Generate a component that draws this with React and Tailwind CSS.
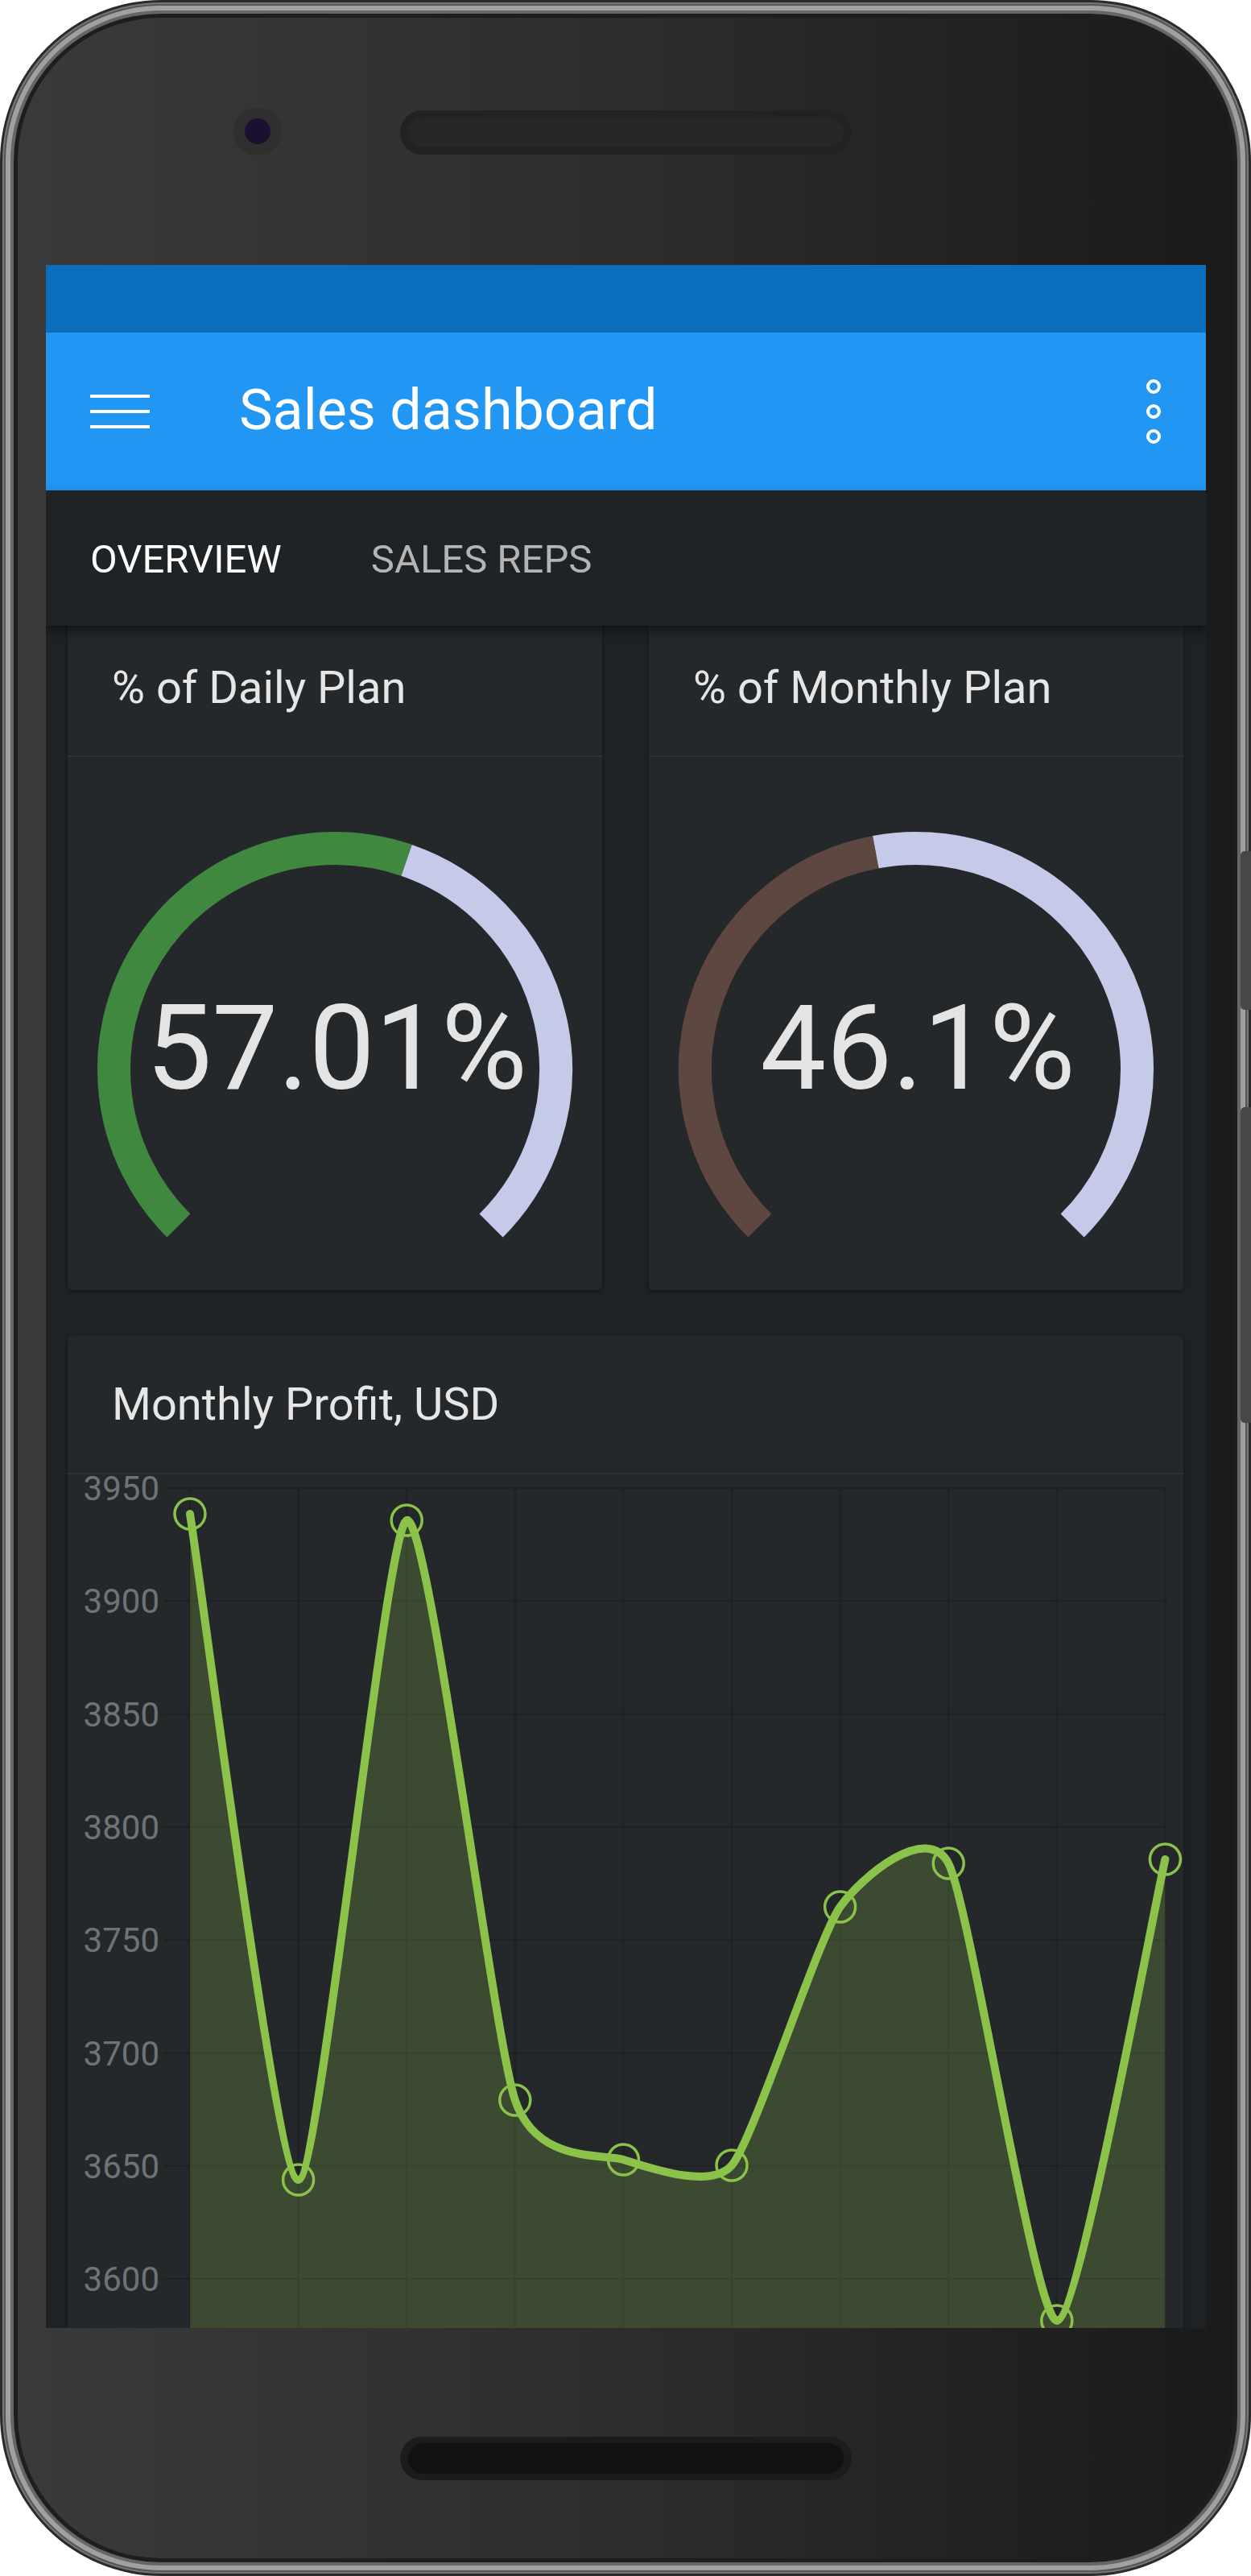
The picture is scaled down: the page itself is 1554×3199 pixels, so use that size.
import React from "react";

function arcPath(cx, cy, r, a0, a1) {
  const rad = (a) => (a * Math.PI) / 180;
  const x0 = cx + r * Math.cos(rad(a0));
  const y0 = cy + r * Math.sin(rad(a0));
  const x1 = cx + r * Math.cos(rad(a1));
  const y1 = cy + r * Math.sin(rad(a1));
  const large = a1 - a0 > 180 ? 1 : 0;
  return `M${x0.toFixed(2)} ${y0.toFixed(2)} A${r} ${r} 0 ${large} 1 ${x1.toFixed(2)} ${y1.toFixed(2)}`;
}

function Gauge({ value, label, color }) {
  const cx = 332;
  const cy = 388;
  const r = 274.5;
  const sw = 41;
  const end = 135 + (value / 100) * 270;
  return (
    <svg width="664" height="662" viewBox="0 0 664 662" className="block">
      <path d={arcPath(cx, cy, r, 135, end)} stroke={color} strokeWidth={sw} fill="none" />
      <path d={arcPath(cx, cy, r, end, 405)} stroke="#c5cae9" strokeWidth={sw} fill="none" />
      <text
        x={cx + 2}
        y={412}
        textAnchor="middle"
        fontSize="146"
        fill="#e4e4e4"
        fontFamily="Roboto, 'Noto Sans', sans-serif"
      >
        {label}
      </text>
    </svg>
  );
}

function smoothPath(pts, k = 0.1) {
  let d = `M${pts[0][0]} ${pts[0][1]}`;
  for (let i = 0; i < pts.length - 1; i++) {
    const p0 = pts[i - 1] || pts[i];
    const p1 = pts[i];
    const p2 = pts[i + 1];
    const p3 = pts[i + 2] || p2;
    const c1 = [p1[0] + (p2[0] - p0[0]) * k, p1[1] + (p2[1] - p0[1]) * k];
    const c2 = [p2[0] - (p3[0] - p1[0]) * k, p2[1] - (p3[1] - p1[1]) * k];
    d += ` C${c1[0].toFixed(2)} ${c1[1].toFixed(2)} ${c2[0].toFixed(2)} ${c2[1].toFixed(2)} ${p2[0].toFixed(2)} ${p2[1].toFixed(2)}`;
  }
  return d;
}

function ProfitChart() {
  const W = 1386;
  const H = 1160;
  const x0 = 152;
  const dx = 134.6;
  const y0 = 17;
  const dy = 140.3;
  const ys = [49, 876, 57, 777, 851, 858, 537, 483, 1051, 478];
  const pts = ys.map((y, i) => [x0 + dx * i, y]);
  const line = smoothPath(pts, 0.1);
  const area = `${line} L${pts[pts.length - 1][0]} ${H} L${pts[0][0]} ${H} Z`;
  const grid = [0, 1, 2, 3, 4, 5, 6, 7, 8];
  const labels = ["3950", "3900", "3850", "3800", "3750", "3700", "3650", "3600"];
  return (
    <svg width={W} height={H} viewBox={`0 0 ${W} ${H}`} className="block overflow-visible">
      {grid.map((i) => (
        <line key={"h" + i} x1={119} x2={1365} y1={y0 + dy * i} y2={y0 + dy * i} stroke="#1e2124" strokeWidth="2" />
      ))}
      {pts.map((p, i) => (
        <line key={"v" + i} x1={p[0]} x2={p[0]} y1={y0} y2={H} stroke="#1e2124" strokeWidth="2" />
      ))}
      {labels.map((l, i) => (
        <text
          key={"t" + l}
          x={114}
          y={y0 + dy * i + 15}
          textAnchor="end"
          fontSize="42"
          fill="#6f7376"
          fontFamily="Roboto, 'Noto Sans', sans-serif"
        >
          {l}
        </text>
      ))}
      <path d={area} fill="#8bc34a" fillOpacity="0.22" />
      {pts.map((p, i) => (
        <circle key={"c" + i} cx={p[0]} cy={p[1]} r="19" fill="none" stroke="#8bc34a" strokeWidth="3.5" />
      ))}
      <path d={line} fill="none" stroke="#8bc34a" strokeWidth="10" strokeLinejoin="round" strokeLinecap="round" />
    </svg>
  );
}

function GaugeCard({ title, value, label, color }) {
  return (
    <div className="w-[664px] bg-[#24282b] rounded-b-[6px] shadow-[0_2px_5px_rgba(0,0,0,0.35)]">
      <div className="h-[170px] border-b-2 border-[#2e3236] flex items-center pl-[55px] text-[56px] text-[#e6e6e6]">
        {title}
      </div>
      <div className="h-[662px]">
        <Gauge value={value} label={label} color={color} />
      </div>
    </div>
  );
}

export default function App() {
  return (
    <div className="relative w-[1554px] h-[3199px] bg-white">
      {/* phone frame bands */}
      <div className="w-[1554px] h-[3199px] rounded-[200px] bg-[#2a2a2a] p-[3px]">
        <div className="h-full rounded-[197px] bg-[#767676] p-[2px]">
          <div className="h-full rounded-[195px] bg-[#555555] p-[2px]">
            <div className="h-full rounded-[193px] bg-[#a0a0a0] p-[6px]">
              <div className="h-full rounded-[187px] bg-[#666666] p-[4px]">
                <div className="h-full rounded-[183px] bg-[#1e1e1e] p-[5px]">
                  <div className="h-full rounded-[178px] bg-linear-to-r from-[#3a3a3a] via-[#2d2d2d] to-[#1a1a1a] flex flex-col">
                    {/* top: camera + speaker */}
                    <div className="h-[307px] shrink-0 flex items-start pt-[111px] pl-[268px]">
                      <div className="w-[60px] h-[60px] rounded-full bg-[#2f2f2f] flex items-center justify-center">
                        <div className="w-[32px] h-[32px] rounded-full bg-[#1b1030]" />
                      </div>
                      <div className="ml-[147px] mt-[4px] w-[561px] h-[55px] rounded-full bg-[#222222] px-[10px] py-[10px]">
                        <div className="w-full h-full rounded-full bg-[#272727]" />
                      </div>
                    </div>

                    {/* screen */}
                    <div className="ml-[35px] w-[1441px] h-[2562px] shrink-0 overflow-hidden bg-[#1e2225] flex flex-col font-['Roboto','Noto_Sans',sans-serif]">
                      <div className="h-[84px] shrink-0 bg-[#0b6ebd]" />
                      <div className="h-[196px] shrink-0 bg-[#2196f3] flex items-center">
                        <div className="ml-[55px] w-[74px] flex flex-col gap-[15px]">
                          <div className="h-[4px] bg-white" />
                          <div className="h-[4px] bg-white" />
                          <div className="h-[4px] bg-white" />
                        </div>
                        <div className="ml-[111px] -mt-[4px] text-[70px] text-white leading-none">Sales dashboard</div>
                        <div className="ml-auto mr-[56px] flex flex-col gap-[13px]">
                          <div className="w-[18px] h-[18px] rounded-full border-[4px] border-white" />
                          <div className="w-[18px] h-[18px] rounded-full border-[4px] border-white" />
                          <div className="w-[18px] h-[18px] rounded-full border-[4px] border-white" />
                        </div>
                      </div>
                      <div className="relative z-10 h-[168px] shrink-0 bg-[#1f2326] flex items-center pt-[4px] text-[49px] shadow-[0_6px_12px_rgba(0,0,0,0.45)]">
                        <span className="ml-[55px] text-white">OVERVIEW</span>
                        <span className="ml-[111px] text-[#b4b4b4]">SALES REPS</span>
                      </div>

                      <div className="-mt-[7px] pl-[27px] pr-[28px]">
                        <div className="flex gap-[58px]">
                          <GaugeCard title="% of Daily Plan" value={57.01} label="57.01%" color="#40873f" />
                          <GaugeCard title="% of Monthly Plan" value={46.1} label="46.1%" color="#5d4740" />
                        </div>
                        <div className="mt-[57px] w-[1386px] bg-[#24282b] rounded-t-[6px] shadow-[0_2px_5px_rgba(0,0,0,0.35)]">
                          <div className="h-[172px] border-b-2 border-[#2e3236] flex items-center pl-[55px] text-[56px] text-[#e6e6e6]">
                            Monthly Profit, USD
                          </div>
                          <ProfitChart />
                        </div>
                      </div>
                    </div>

                    {/* bottom speaker */}
                    <div className="flex-1 pt-[135px] pl-[475px]">
                      <div className="w-[561px] h-[54px] rounded-full bg-[#1c1c1c] px-[10px] py-[8px]">
                        <div className="w-full h-full rounded-full bg-[#111111]" />
                      </div>
                    </div>
                  </div>
                </div>
              </div>
            </div>
          </div>
        </div>
      </div>

      {/* side buttons */}
      <div className="absolute left-[1541px] top-[1057px] w-[13px] h-[197px] bg-[#474747] rounded-l-[5px]" />
      <div className="absolute left-[1541px] top-[1375px] w-[13px] h-[392px] bg-[#474747] rounded-l-[5px]" />
    </div>
  );
}
